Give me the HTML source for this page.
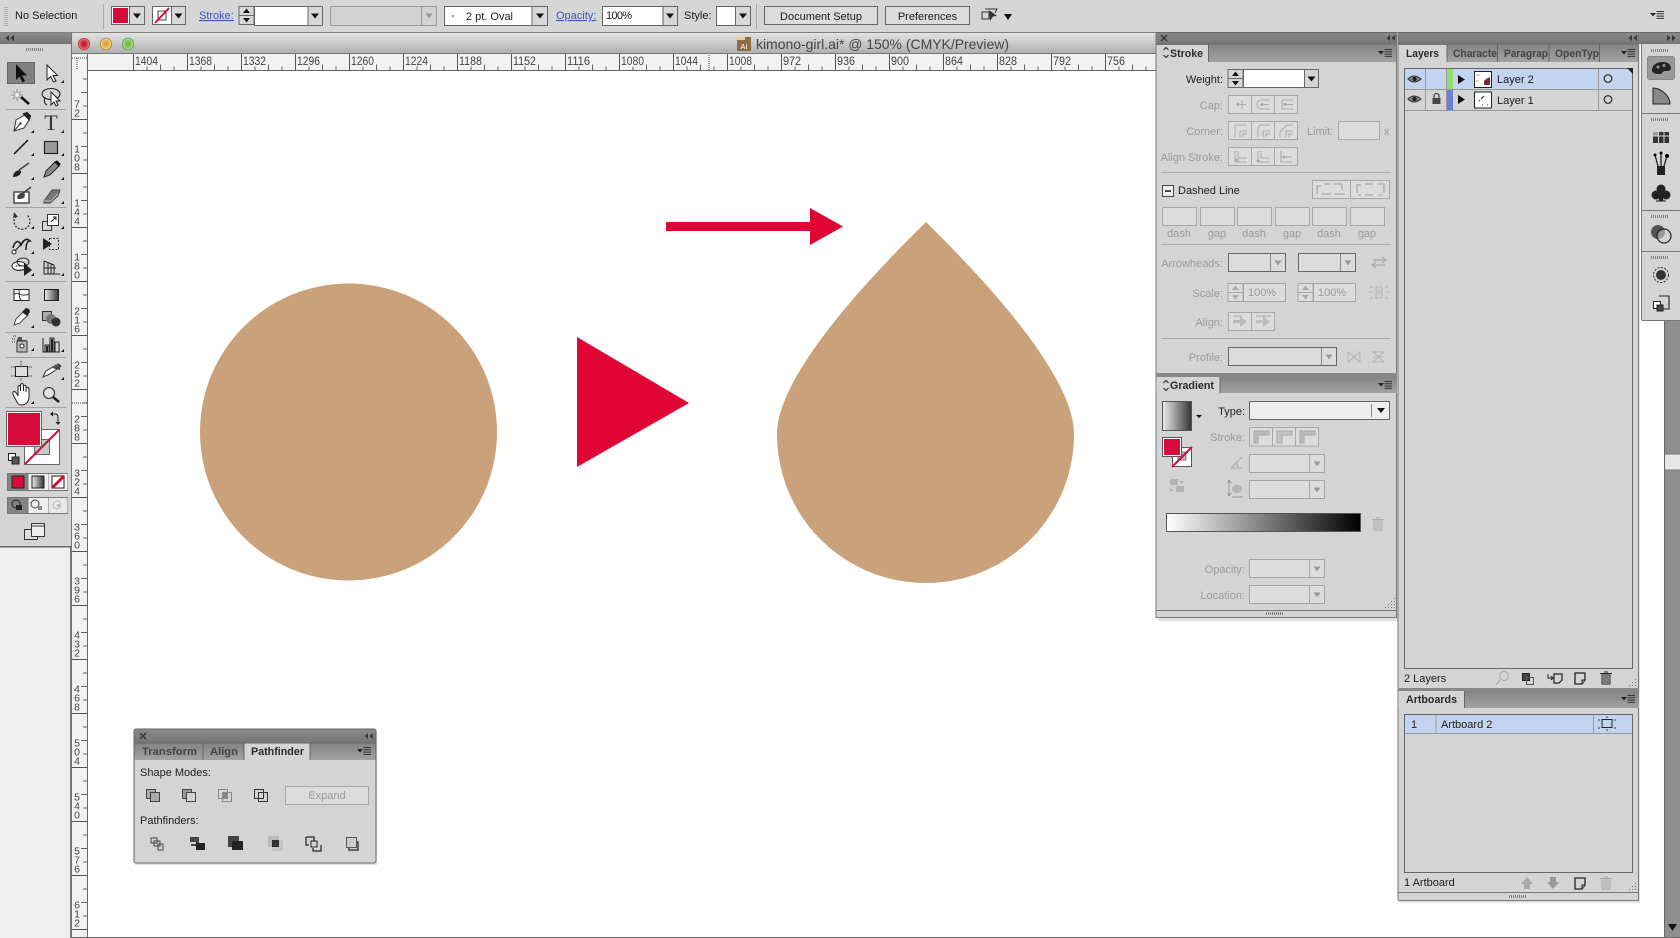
<!DOCTYPE html>
<html lang="en"><head><meta charset="utf-8"><title>kimono-girl.ai</title>
<style>
html,body{margin:0;padding:0;width:1680px;height:938px;overflow:hidden;background:#fff}
svg{display:block}
text{font-family:"Liberation Sans",sans-serif;font-size:11px;fill:#1c1c1c}
.e{text-anchor:end}.m{text-anchor:middle}
.g{fill:#9b9b9b}.b{font-weight:bold}.tab{font-weight:bold;fill:#444}
.lnk{fill:#3c57b4;text-decoration:underline}
.rh{font-size:11.5px;fill:#444}.rv{font-size:10.5px;fill:#444;text-anchor:middle}
.in{fill:#dcdcdc;stroke:#a4a4a4}.in2{fill:#dcdcdc;stroke:#666}
.ln{stroke:#a8a8a8;fill:none}.sep{stroke:#a3a3a3;stroke-width:1}
.ic{fill:none;stroke:#222;stroke-width:1.2}.ig{fill:none;stroke:#aaa;stroke-width:1}
</style></head><body>
<svg width="1680" height="938" viewBox="0 0 1680 938" xmlns="http://www.w3.org/2000/svg">
<defs>
<linearGradient id="tb" x1="0" y1="0" x2="0" y2="1"><stop offset="0" stop-color="#e2e2e2"/><stop offset="1" stop-color="#aeaeae"/></linearGradient>
<linearGradient id="hd" x1="0" y1="0" x2="0" y2="1"><stop offset="0" stop-color="#8a8a8a"/><stop offset="1" stop-color="#767676"/></linearGradient>
<linearGradient id="tr" x1="0" y1="0" x2="0" y2="1"><stop offset="0" stop-color="#838383"/><stop offset="1" stop-color="#a2a2a2"/></linearGradient>
<linearGradient id="gb" x1="0" y1="0" x2="1" y2="0"><stop offset="0" stop-color="#fff"/><stop offset="1" stop-color="#000"/></linearGradient>
<linearGradient id="gs" x1="0" y1="0" x2="1" y2="0"><stop offset="0" stop-color="#eee"/><stop offset="1" stop-color="#333"/></linearGradient>
<radialGradient id="rd"><stop offset="0" stop-color="#b80c2c"/><stop offset=".4" stop-color="#cc2a42"/><stop offset="1" stop-color="#e87a7a"/></radialGradient>
<radialGradient id="yl"><stop offset="0" stop-color="#d9962a"/><stop offset="1" stop-color="#f4d088"/></radialGradient>
<radialGradient id="gr"><stop offset="0" stop-color="#5fae3c"/><stop offset="1" stop-color="#aee08a"/></radialGradient>
<pattern id="ph" patternUnits="userSpaceOnUse" x="133" y="54" width="54" height="16">
<rect x="0" y="0" width="1" height="16" fill="#555"/><rect x="13.5" y="12.5" width="1" height="3.5" fill="#666"/><rect x="27" y="10.5" width="1" height="5.5" fill="#666"/><rect x="40.5" y="12.5" width="1" height="3.5" fill="#666"/>
</pattern>
<pattern id="pv" patternUnits="userSpaceOnUse" x="72" y="119" width="15" height="54">
<rect x="0" y="0" width="15" height="1" fill="#555"/><rect x="11" y="13.5" width="4" height="1" fill="#666"/><rect x="9" y="27" width="6" height="1" fill="#666"/><rect x="11" y="40.5" width="4" height="1" fill="#666"/>
</pattern>
<g id="menu"><path d="M0 -2H6L3 1.5Z" fill="#222"/><path d="M6.5 -3.5H14M6.5 -1.2H14M6.5 1.1H14M6.5 3.4H14" stroke="#333" stroke-width="1"/></g>
<g id="col"><path d="M4 -3L0.5 0L4 3ZM9 -3L5.500 0L9 3Z" fill="#3a3a3a"/></g>
<g id="cor"><path d="M3 -3V0H0Z" fill="#111"/></g>
<g id="darr"><path d="M-4 -2.500H4L0 2.500Z" fill="#111"/></g>
<g id="darg"><path d="M-3.500 -2.500H3.500L0 2.500Z" fill="#999"/></g>
<g id="x"><path d="M-3 -3L3 3M3 -3L-3 3" stroke="#333" stroke-width="1.4"/></g>
<g id="trash"><path d="M-4 -3H4V6H-4Z M-6 -4.500H6 M-2 -6H2 M-2 -2V5 M0 -2V5 M2 -2V5" fill="none" stroke="currentColor" stroke-width="1"/></g>
<g id="newl"><path d="M-5 -5H5V2L2 6H-5Z" fill="none" stroke="#222" stroke-width="1.3"/><path d="M5 2H2V6" fill="#999" stroke="#222"/></g>
<g id="grip"><path d="M.5 0V3M2.500 0V3M4.500 0V3M6.500 0V3M8.500 0V3M10.500 0V3M12.500 0V3M14.500 0V3M16.500 0V3" stroke="#808080" stroke-width="1" shape-rendering="crispEdges"/></g>
<g id="rsz"><path d="M9 0H10V1H9ZM6 3H7V4H6ZM9 3H10V4H9ZM3 6H4V7H3ZM6 6H7V7H6ZM9 6H10V7H9ZM0 9H1V10H0ZM3 9H4V10H3ZM6 9H7V10H6ZM9 9H10V10H9Z" fill="#777"/></g>
<g id="sten"><path d="M0 .5H15V18.500H0Z" fill="#d8d8d8" stroke="#666"/><path d="M0 9.500H15" stroke="#666"/><path d="M7.500 2.500L11 7H4ZM7.500 16.500L11 12H4Z" fill="#111"/></g>
<g id="steg"><path d="M0 .5H15V18.500H0Z" fill="#dcdcdc" stroke="#a4a4a4"/><path d="M0 9.500H15" stroke="#a4a4a4"/><path d="M7.500 2.500L11 7H4ZM7.500 16.500L11 12H4Z" fill="#aaa"/></g>
</defs>

<!-- base -->
<rect width="1680" height="938" fill="#ffffff"/>
<rect x="0" y="0" width="1680" height="33" fill="#d6d6d6"/>
<rect x="0" y="32" width="1680" height="1" fill="#808080"/>
<rect x="0" y="547" width="70" height="391" fill="#efefef"/>
<rect x="70" y="547" width="2" height="391" fill="#777"/>

<!-- doc window title -->
<rect x="72" y="33" width="1090" height="21" fill="url(#tb)"/>
<rect x="72" y="53" width="1090" height="1" fill="#777"/>
<circle cx="84" cy="44" r="5.800" fill="url(#rd)" stroke="#944" stroke-width=".7"/>
<circle cx="106" cy="44" r="5.800" fill="url(#yl)" stroke="#a07c3a" stroke-width=".7"/>
<circle cx="128" cy="44" r="5.800" fill="url(#gr)" stroke="#5f8f4a" stroke-width=".7"/>
<rect x="737" y="37" width="14" height="14" fill="#8c6d44"/><rect x="737" y="37" width="8" height="3" fill="#e8cf8a"/>
<text x="744" y="49" class="m" style="font-size:7px;fill:#f1e4c8;font-weight:bold">Ai</text>
<text x="756" y="49" style="font-size:14px;fill:#444" textLength="253" lengthAdjust="spacing">kimono-girl.ai* @ 150% (CMYK/Preview)</text>

<!-- rulers -->
<rect x="72" y="54" width="1090" height="16" fill="#f2f2f2"/>
<rect x="133" y="54" width="1030" height="16" fill="url(#ph)"/>
<rect x="72" y="70" width="1090" height="1" fill="#666"/>
<rect x="72" y="54" width="15" height="884" fill="#f2f2f2"/>
<rect x="72" y="70" width="15" height="868" fill="url(#pv)"/>
<rect x="87" y="54" width="1" height="884" fill="#666"/>
<path d="M77 58V70M72 58H87" stroke="#444" stroke-dasharray="1 1"/>
<path d="M709 55V70" stroke="#444" stroke-dasharray="1 1"/>
<path d="M72 403H87" stroke="#444" stroke-dasharray="1 1"/>
<g class="rhg">
<text x="135" y="65" class="rh" textLength="23" lengthAdjust="spacingAndGlyphs">1404</text>
<text x="189" y="65" class="rh" textLength="23" lengthAdjust="spacingAndGlyphs">1368</text>
<text x="243" y="65" class="rh" textLength="23" lengthAdjust="spacingAndGlyphs">1332</text>
<text x="297" y="65" class="rh" textLength="23" lengthAdjust="spacingAndGlyphs">1296</text>
<text x="351" y="65" class="rh" textLength="23" lengthAdjust="spacingAndGlyphs">1260</text>
<text x="405" y="65" class="rh" textLength="23" lengthAdjust="spacingAndGlyphs">1224</text>
<text x="459" y="65" class="rh" textLength="23" lengthAdjust="spacingAndGlyphs">1188</text>
<text x="513" y="65" class="rh" textLength="23" lengthAdjust="spacingAndGlyphs">1152</text>
<text x="567" y="65" class="rh" textLength="23" lengthAdjust="spacingAndGlyphs">1116</text>
<text x="621" y="65" class="rh" textLength="23" lengthAdjust="spacingAndGlyphs">1080</text>
<text x="675" y="65" class="rh" textLength="23" lengthAdjust="spacingAndGlyphs">1044</text>
<text x="729" y="65" class="rh" textLength="23" lengthAdjust="spacingAndGlyphs">1008</text>
<text x="783" y="65" class="rh" textLength="18" lengthAdjust="spacingAndGlyphs">972</text>
<text x="837" y="65" class="rh" textLength="18" lengthAdjust="spacingAndGlyphs">936</text>
<text x="891" y="65" class="rh" textLength="18" lengthAdjust="spacingAndGlyphs">900</text>
<text x="945" y="65" class="rh" textLength="18" lengthAdjust="spacingAndGlyphs">864</text>
<text x="999" y="65" class="rh" textLength="18" lengthAdjust="spacingAndGlyphs">828</text>
<text x="1053" y="65" class="rh" textLength="18" lengthAdjust="spacingAndGlyphs">792</text>
<text x="1107" y="65" class="rh" textLength="18" lengthAdjust="spacingAndGlyphs">756</text>
</g>
<g>
<text x="77" y="107.500" class="rv">7</text><text x="77" y="116.300" class="rv">2</text>
<text x="77" y="152.700" class="rv">1</text><text x="77" y="161.500" class="rv">0</text><text x="77" y="170.300" class="rv">8</text>
<text x="77" y="206.700" class="rv">1</text><text x="77" y="215.500" class="rv">4</text><text x="77" y="224.300" class="rv">4</text>
<text x="77" y="260.700" class="rv">1</text><text x="77" y="269.500" class="rv">8</text><text x="77" y="278.300" class="rv">0</text>
<text x="77" y="314.700" class="rv">2</text><text x="77" y="323.500" class="rv">1</text><text x="77" y="332.300" class="rv">6</text>
<text x="77" y="368.700" class="rv">2</text><text x="77" y="377.500" class="rv">5</text><text x="77" y="386.300" class="rv">2</text>
<text x="77" y="422.700" class="rv">2</text><text x="77" y="431.500" class="rv">8</text><text x="77" y="440.300" class="rv">8</text>
<text x="77" y="476.700" class="rv">3</text><text x="77" y="485.500" class="rv">2</text><text x="77" y="494.300" class="rv">4</text>
<text x="77" y="530.700" class="rv">3</text><text x="77" y="539.500" class="rv">6</text><text x="77" y="548.300" class="rv">0</text>
<text x="77" y="584.700" class="rv">3</text><text x="77" y="593.500" class="rv">9</text><text x="77" y="602.300" class="rv">6</text>
<text x="77" y="638.700" class="rv">4</text><text x="77" y="647.500" class="rv">3</text><text x="77" y="656.300" class="rv">2</text>
<text x="77" y="692.700" class="rv">4</text><text x="77" y="701.500" class="rv">6</text><text x="77" y="710.300" class="rv">8</text>
<text x="77" y="746.700" class="rv">5</text><text x="77" y="755.500" class="rv">0</text><text x="77" y="764.300" class="rv">4</text>
<text x="77" y="800.700" class="rv">5</text><text x="77" y="809.500" class="rv">4</text><text x="77" y="818.300" class="rv">0</text>
<text x="77" y="854.700" class="rv">5</text><text x="77" y="863.500" class="rv">7</text><text x="77" y="872.300" class="rv">6</text>
<text x="77" y="908.700" class="rv">6</text><text x="77" y="917.500" class="rv">1</text><text x="77" y="926.300" class="rv">2</text>
</g>

<!-- artwork -->
<circle cx="348.500" cy="432" r="148.500" fill="#c9a27b"/>
<path d="M577 337L689 403L577 467Z" fill="#e00534"/>
<path d="M666 222H810V208L843 226.500L810 245V231H666Z" fill="#e00534"/>
<path d="M926 222C870 277 777 375 777 434C777 516 843 583 926 583C1008 583 1074 516 1074 434C1074 375 982 277 926 222Z" fill="#c9a27b"/>

<!-- scrollbar -->
<rect x="1664" y="33" width="16" height="905" fill="#8f8f8f"/>
<rect x="1664" y="33" width="1" height="905" fill="#666"/>
<rect x="1665" y="454" width="15" height="16" fill="#e6e6e6"/>
<path d="M1665 454H1680M1665 470H1680" stroke="#777"/>
<path d="M1668 924H1677L1672.500 931Z" fill="#111"/>
<rect x="72" y="937" width="1608" height="1" fill="#666"/>

<!-- top control bar -->
<g>
<path d="M5 7V27M7 7V27" stroke="#888" stroke-dasharray="1 1"/>
<text x="15" y="19">No Selection</text>
<path d="M103.500 4V29" stroke="#aaa"/>
<rect x="111.500" y="6.500" width="33" height="18" fill="#d8d8d8" stroke="#666"/>
<rect x="112.500" y="7.500" width="16" height="16" fill="#d60b3a" stroke="#fff"/>
<path d="M129.500 7V24" stroke="#666"/><use href="#darr" x="137" y="16"/>
<rect x="152.500" y="6.500" width="33" height="18" fill="#d8d8d8" stroke="#666"/>
<rect x="153" y="7" width="18" height="17" fill="#fff"/>
<rect x="158" y="11" width="8" height="9" fill="none" stroke="#444"/>
<path d="M155 23L169 8" stroke="#d60b3a" stroke-width="2"/>
<path d="M171.500 7V24" stroke="#666"/><use href="#darr" x="178.500" y="16"/>
<text x="199" y="19" class="lnk">Stroke:</text>
<g transform="translate(239,6)"><use href="#sten"/></g>
<rect x="254.500" y="6.500" width="68" height="19" fill="#fff" stroke="#666"/>
<rect x="308" y="7" width="14" height="18" fill="#d8d8d8"/><path d="M308 7V25" stroke="#666"/><use href="#darr" x="315" y="16"/>
<rect x="330.500" y="6.500" width="106" height="19" fill="#d2d2d2" stroke="#999"/>
<path d="M421.500 7V25" stroke="#999"/><use href="#darg" x="429" y="16"/>
<rect x="444.500" y="6.500" width="103" height="19" fill="#fff" stroke="#666"/>
<rect x="532" y="7" width="15" height="18" fill="#d8d8d8"/><path d="M532 7V25" stroke="#666"/><use href="#darr" x="540" y="16"/>
<circle cx="453" cy="16" r=".8" fill="#111"/>
<text x="466" y="20" textLength="47" lengthAdjust="spacing">2 pt. Oval</text>
<text x="556" y="19" class="lnk">Opacity:</text>
<rect x="602.500" y="6.500" width="75" height="19" fill="#fff" stroke="#666"/>
<rect x="663" y="7" width="14" height="18" fill="#d8d8d8"/><path d="M663 7V25" stroke="#666"/><use href="#darr" x="670" y="16"/>
<text x="606" y="19" textLength="26" lengthAdjust="spacing">100%</text>
<text x="684" y="19">Style:</text>
<rect x="716.500" y="6.500" width="34" height="19" fill="#d8d8d8" stroke="#666"/>
<rect x="717" y="7" width="18" height="18" fill="#fff"/><path d="M735.500 7V25" stroke="#666"/><use href="#darr" x="743" y="16"/>
<path d="M756.500 4V29" stroke="#aaa"/>
<rect x="764.500" y="6.500" width="113" height="18" fill="#dcdcdc" stroke="#666"/>
<text x="821" y="20" class="m">Document Setup</text>
<rect x="885.500" y="6.500" width="84" height="18" fill="#dcdcdc" stroke="#666"/>
<text x="927.500" y="20" class="m">Preferences</text>
<path d="M982 12H989V19H982ZM985 9L992 9L997 9L995 13" fill="none" stroke="#333"/>
<path d="M989 10L997 16L993 16.500L990 21Z" fill="#333"/>
<path d="M1004 14H1012L1008 20Z" fill="#111"/>
<use href="#menu" x="1650" y="15"/>
</g>

<!-- Tools panel -->
<rect x="0" y="33" width="72" height="514" fill="#d4d4d4"/>
<rect x="0" y="33" width="72" height="11" fill="url(#hd)"/>
<rect x="71" y="33" width="1" height="514" fill="#777"/>
<rect x="0" y="546" width="72" height="1.500" fill="#666"/>
<g transform="translate(5,38)"><path d="M4 -3L.5 0L4 3ZM9 -3L5.500 0L9 3Z" fill="#333"/></g>
<use href="#grip" x="26" y="48"/>
<rect x="7.500" y="62.500" width="27" height="21" fill="#808080" stroke="#666"/>
<path d="M16 64V80L19.500 76.500L22.500 82.500L25 81L22 75.500L27 75.500Z" fill="#111"/>
<path d="M47 65V80L50.500 76.500L53.500 82L56 81L53 75.500L57.500 75.500Z" fill="#fff" stroke="#222"/>
<use href="#cor" x="61" y="83"/>
<!-- magic wand -->
<path d="M21 97L29 104" stroke="#111" stroke-width="2.500"/>
<path d="M17 89V101M11 95H23M13 91L21 99M21 91L13 99" stroke="#9a9a9a" stroke-width="1.200"/><circle cx="17" cy="95" r="2" fill="#eee"/>
<!-- lasso -->
<ellipse cx="51" cy="94" rx="9" ry="5.500" fill="none" stroke="#222" stroke-width="1.100"/>
<path d="M45 97Q43 103 47 105" fill="none" stroke="#222"/>
<path d="M51 92V105L54 102L56 106L58 105L56 101L60 101Z" fill="#fff" stroke="#222"/>
<line x1="6" y1="109.500" x2="66" y2="109.500" class="sep"/>
<!-- pen -->
<path d="M14 131L16 120L25 115L29 120L24 128Z" fill="#fff" stroke="#333"/>
<path d="M24 114L29 119L30 116L27 113Z" fill="#222" stroke="#222" stroke-width="2"/>
<path d="M14 131L20 124" stroke="#333"/><circle cx="20.500" cy="123.500" r="1.200" fill="#333"/>
<use href="#cor" x="31" y="133"/>
<text x="51" y="130" class="m" style="font-family:'Liberation Serif',serif;font-size:22px;fill:#333">T</text>
<use href="#cor" x="61" y="133"/>
<path d="M14 154L28 140" stroke="#111" stroke-width="1.400"/><use href="#cor" x="31" y="156"/>
<rect x="44.500" y="141.500" width="13" height="12" fill="#9a9a9a" stroke="#222" stroke-width="1.200"/><use href="#cor" x="61" y="156"/>
<!-- brush -->
<path d="M19 170L29 163" stroke="#444" stroke-width="1.600"/><path d="M13 177C13 172 18 169 21 171C22 174 18 177 13 177Z" fill="#222"/><use href="#cor" x="31" y="180"/>
<!-- pencil -->
<path d="M44 177L46 171L55 162L59 166L50 175Z" fill="#888" stroke="#222"/><path d="M55 162L59 166L60 164L57 161Z" fill="#111" stroke="#111"/><use href="#cor" x="61" y="180"/>
<!-- blob -->
<rect x="14" y="192" width="15" height="11" fill="#fff" stroke="#333" stroke-width="1.300"/>
<path d="M31 187L22 194M18 198C18 194 22 193 24 194C25 197 22 199 18 198Z" stroke="#444" stroke-width="1.500" fill="#444"/>
<!-- eraser -->
<path d="M44 201L52 190H60L58 196L50 203H44Z" fill="#777" stroke="#444"/><path d="M44 201H51L58 194" fill="none" stroke="#bbb"/><use href="#cor" x="61" y="204"/>
<line x1="6" y1="207.500" x2="66" y2="207.500" class="sep"/>
<!-- rotate -->
<path d="M16 216A8 8 0 1 0 27 215" fill="none" stroke="#333" stroke-width="1.300" stroke-dasharray="2 1.500"/><path d="M14 212L18 217L13 218Z" fill="#333"/><use href="#cor" x="31" y="229"/>
<!-- scale -->
<rect x="42.500" y="221.500" width="9" height="9" fill="none" stroke="#333"/><rect x="47.500" y="214.500" width="11" height="11" fill="#fff" stroke="#333"/><path d="M51 222L56 217M53 217H56V220" fill="none" stroke="#222"/><use href="#cor" x="61" y="229"/>
<!-- warp -->
<path d="M13 248C15 240 19 240 21 245C24 239 27 238 30 241C27 241 26 245 26 250" fill="none" stroke="#222" stroke-width="1.600"/><path d="M14 252L25 240" stroke="#111"/><circle cx="14" cy="252" r="2" fill="#fff" stroke="#222"/><use href="#cor" x="31" y="254"/>
<!-- free transform -->
<rect x="49.500" y="238.500" width="9" height="11" fill="none" stroke="#333" stroke-dasharray="2 1.500"/><path d="M43 238L52 244L43 250Z" fill="#222"/>
<!-- shape builder -->
<ellipse cx="19" cy="266" rx="7" ry="4.500" fill="#fff" stroke="#222"/><ellipse cx="23" cy="262" rx="6" ry="4" fill="none" stroke="#222"/><path d="M16 266H25M17 270H30" stroke="#222" stroke-dasharray="1.500 1"/><path d="M24 263L32 270L24 276Z" fill="#222"/><use href="#cor" x="31" y="276"/>
<!-- perspective -->
<path d="M44 261V274H60M44 261L54 265V274M48 263V274M51 264V274M44 268H56" fill="none" stroke="#222"/><use href="#cor" x="61" y="276"/>
<line x1="6" y1="281.500" x2="66" y2="281.500" class="sep"/>
<!-- mesh -->
<rect x="14" y="289.500" width="15" height="11" fill="#fff" stroke="#222"/><path d="M14 295C18 290 20 298 29 294M19 290C20 295 18 298 22 301" fill="none" stroke="#333"/>
<rect x="44.500" y="289.500" width="14" height="11" fill="url(#gs)" stroke="#222"/>
<!-- eyedropper -->
<path d="M14 325L16 319L24 311L28 315L20 323Z" fill="#fff" stroke="#444"/><path d="M22 312L26 308L29 309L30 312L27 316Z" fill="#222"/><use href="#cor" x="31" y="328"/>
<!-- blend -->
<rect x="42.500" y="311.500" width="9" height="9" fill="#aaa" stroke="#333"/><circle cx="51" cy="319" r="5" fill="#777"/><circle cx="56" cy="322" r="4.500" fill="#333"/>
<line x1="6" y1="332.500" x2="66" y2="332.500" class="sep"/>
<!-- sprayer -->
<path d="M18 337H22V340H26V342H17V340Z" fill="#555"/><rect x="17" y="341" width="10" height="11" fill="#bbb" stroke="#333"/><circle cx="22" cy="346" r="2" fill="#fff" stroke="#222"/><path d="M12 339H15M13 336H16M12 342H15" stroke="#333" stroke-dasharray="1 1"/><use href="#cor" x="31" y="351"/>
<!-- graph -->
<path d="M43 338V352H60M45 352V345H49V352M50 352V338H54V352M55 352V342H59V352" fill="none" stroke="#222"/><path d="M46 352V346h2v6zM51 352V339h2v13z" fill="#222"/><use href="#cor" x="61" y="352"/>
<line x1="6" y1="357.500" x2="66" y2="357.500" class="sep"/>
<!-- artboard -->
<rect x="15.500" y="366.500" width="12" height="10" fill="#dedede" stroke="#222"/><path d="M21 361V365M21 378V381M11 367H15M28 367H32M11 376H15M28 376H32" stroke="#444" stroke-dasharray="1.500 1"/>
<!-- slice -->
<path d="M43 377L46 371L58 364L61 366L50 374Z" fill="#fff" stroke="#333"/><path d="M52 368L60 364L60 370Z" fill="#444"/><use href="#cor" x="61" y="380"/>
<!-- hand -->
<path d="M16 400C13 395 12 393 13.500 391.500C15 391 17 394 18 396V387C18 385 20 385 20.500 387V391V385C21 383 23 383 23.500 385V391V386C24 385 26 385 26 387V392V388C27 387 29 387 29 389V396C29 402 26 405 21 405C19 405 17 403 16 400Z" fill="#fff" stroke="#222"/><use href="#cor" x="31" y="404"/>
<!-- zoom -->
<circle cx="49" cy="393" r="5.500" fill="#e2e2e2" stroke="#444" stroke-width="1.300"/><path d="M53 397L59 402" stroke="#222" stroke-width="2.500"/>
<line x1="6" y1="407.500" x2="66" y2="407.500" class="sep"/>
<!-- fill stroke -->
<rect x="24.500" y="429.500" width="35" height="35" fill="#fff" stroke="#666"/>
<rect x="34.500" y="439.500" width="15" height="15" fill="#c8c8c8" stroke="#666"/>
<path d="M25 464L59 430" stroke="#d60b3a" stroke-width="2"/>
<rect x="6.500" y="411.500" width="35" height="35" fill="#d60b3a" stroke="#666"/>
<rect x="7.500" y="412.500" width="33" height="33" fill="#d60b3a" stroke="#fff"/>
<path d="M52 414H55Q58 414 58 418V422" fill="none" stroke="#222" stroke-width="1"/><path d="M53 411.500V416.500L50 414ZM55.500 422H60.500L58 425Z" fill="#222"/>
<rect x="8.500" y="453.500" width="7" height="7" fill="#fff" stroke="#222"/><rect x="12" y="457" width="7" height="7" fill="#555" stroke="#222"/>
<!-- modes -->
<rect x="7.500" y="473.500" width="60" height="17" fill="#d8d8d8" stroke="#777"/>
<rect x="8" y="474" width="20" height="16" fill="#838383"/><path d="M28 474V490M48 474V490" stroke="#777"/>
<rect x="28.500" y="474" width="19.500" height="16" fill="#f0f0f0"/><rect x="48.500" y="474" width="19" height="16" fill="#f0f0f0"/>
<rect x="12" y="476" width="12" height="12" fill="#d60b3a" stroke="#222"/>
<rect x="32" y="476" width="12" height="12" fill="url(#gs)" stroke="#222"/>
<rect x="52" y="476" width="12" height="12" fill="#fff" stroke="#222"/><path d="M52 488L64 476" stroke="#d60b3a" stroke-width="3"/>
<rect x="7.500" y="497.500" width="60" height="16" fill="#ddd" stroke="#777"/>
<rect x="8" y="498" width="20" height="15" fill="#838383"/><path d="M28 498V513M48 498V513" stroke="#777"/>
<rect x="28.500" y="498" width="19.500" height="15" fill="#eee"/><rect x="48.500" y="498" width="19" height="15" fill="#e8e8e8"/>
<circle cx="16" cy="504" r="4" fill="none" stroke="#222"/><rect x="16" y="505" width="6" height="5" fill="#222"/>
<circle cx="35" cy="504" r="4" fill="none" stroke="#444"/><rect x="38" y="506" width="4" height="4" fill="#888"/>
<circle cx="57" cy="505" r="4" fill="none" stroke="#bbb"/><rect x="57" y="504" width="3" height="3" fill="#bbb"/>
<rect x="24.500" y="529.500" width="13" height="10" fill="#ddd" stroke="#333"/>
<rect x="31.500" y="523.500" width="13" height="13" fill="#eee" stroke="#333"/><path d="M32 526H44" stroke="#333"/>

<!-- Stroke + gradient panel -->
<rect x="1158" y="34" width="241" height="587" fill="#000" opacity=".12"/>
<rect x="1156" y="32" width="241" height="586" fill="#d4d4d4"/>
<rect x="1156" y="32" width="241" height="12" fill="url(#hd)"/>
<rect x="1156" y="32" width="241" height="1" fill="#666"/>
<use href="#x" x="1164" y="38"/>
<use href="#col" x="1386" y="38"/>
<rect x="1156" y="44" width="241" height="18" fill="url(#tr)"/>
<path d="M1156 44H1397" stroke="#666"/>
<rect x="1156.500" y="45" width="51.500" height="18" fill="#d4d4d4"/>
<path d="M1208.500 44V62" stroke="#666"/>
<path d="M1163.500 50L1166 47.500L1168.500 50M1163.500 55L1166 57.500L1168.500 55" fill="none" stroke="#222"/>
<text x="1170" y="57" class="b" style="fill:#2a2a2a" textLength="33" lengthAdjust="spacingAndGlyphs">Stroke</text>
<use href="#menu" x="1378" y="53"/>
<path d="M1156 32V618M1396.500 32V618" stroke="#777"/>

<text x="1223" y="83" class="e">Weight:</text>
<g transform="translate(1228,69)"><use href="#sten"/></g>
<rect x="1243.500" y="69.500" width="75" height="18" fill="#fff" stroke="#666"/>
<rect x="1304" y="70" width="14" height="17" fill="#d4d4d4"/><path d="M1304.500 70V87" stroke="#666"/><use href="#darr" x="1311.500" y="79"/>

<text x="1223" y="109" class="e g">Cap:</text>
<rect x="1228.500" y="95.500" width="69" height="18" fill="#dcdcdc" stroke="#a8a8a8"/><path d="M1251.500 95V113M1274.500 95V113" class="ln"/>
<path d="M1242 100V109M1237 104.500H1246" class="ig"/><circle cx="1238" cy="104.500" r="1.500" fill="#aaa"/>
<path d="M1270 100H1262Q1257 100 1257 104.500Q1257 109 1262 109H1270M1260 104.500H1269" class="ig"/><circle cx="1262" cy="104.500" r="1.500" fill="#aaa"/>
<path d="M1282 100H1293M1282 100V109H1293M1285 104.500H1293" class="ig"/><circle cx="1285" cy="104.500" r="1.500" fill="#aaa"/>

<text x="1223" y="135" class="e g">Corner:</text>
<rect x="1228.500" y="121.500" width="69" height="18" fill="#dcdcdc" stroke="#a8a8a8"/><path d="M1251.500 121V139M1274.500 121V139" class="ln"/>
<path d="M1235 137V125H1247M1240 137V131H1247M1243 137V134H1247" class="ig"/>
<path d="M1258 137V129Q1258 125 1262 125H1270M1263 137V131H1270M1266 137V134H1270" class="ig"/>
<path d="M1280 137V132L1287 125H1293M1286 137V131H1293M1289 137V134H1293" class="ig"/>
<text x="1307" y="135" class="g">Limit:</text>
<rect x="1338.500" y="121.500" width="41" height="18" fill="#dcdcdc" stroke="#a8a8a8"/>
<text x="1384" y="135" class="g">x</text>

<text x="1223" y="161" class="e g">Align Stroke:</text>
<rect x="1228.500" y="147.500" width="69" height="18" fill="#dcdcdc" stroke="#a8a8a8"/><path d="M1251.500 147V165M1274.500 147V165" class="ln"/>
<path d="M1235 151V162H1247M1238 151V158H1247M1235 160" class="ig"/><circle cx="1237" cy="160" r="1.500" fill="#aaa"/>
<path d="M1258 151V162H1270M1261 151V158H1270" class="ig"/><circle cx="1258" cy="161" r="1.500" fill="#aaa"/>
<path d="M1281 151V162H1292M1281 157H1292" class="ig"/><circle cx="1284" cy="157" r="1.500" fill="#aaa"/>
<path d="M1161 172.500H1391" class="ln"/>

<rect x="1162.500" y="185.500" width="11" height="11" fill="#eee" stroke="#444"/><path d="M1165 191H1171" stroke="#111" stroke-width="1.500"/>
<text x="1178" y="194">Dashed Line</text>
<rect x="1312.500" y="180.500" width="77" height="18" fill="#dcdcdc" stroke="#a8a8a8"/><path d="M1350.500 180V198" class="ln"/>
<path d="M1317 194V186H1321M1324 184H1331M1334 184H1342V190M1321 194H1331M1334 194H1345" stroke="#aaa" fill="none" stroke-width="1.300"/>
<path d="M1357 193V185H1361M1365 184H1373M1377 184H1384V193M1358 195H1361M1365 195H1373M1378 195H1383" stroke="#aaa" fill="none" stroke-width="1.300"/>

<g fill="#dcdcdc" stroke="#a8a8a8">
<rect x="1162.500" y="207.500" width="34" height="18"/><rect x="1200.500" y="207.500" width="34" height="18"/><rect x="1237.500" y="207.500" width="34" height="18"/><rect x="1275.500" y="207.500" width="34" height="18"/><rect x="1312.500" y="207.500" width="34" height="18"/><rect x="1350.500" y="207.500" width="34" height="18"/>
</g>
<text x="1179" y="237" class="m g">dash</text><text x="1217" y="237" class="m g">gap</text><text x="1254" y="237" class="m g">dash</text><text x="1292" y="237" class="m g">gap</text><text x="1329" y="237" class="m g">dash</text><text x="1367" y="237" class="m g">gap</text>
<path d="M1161 244.500H1391" class="ln"/>

<text x="1223" y="267" class="e g">Arrowheads:</text>
<rect x="1228.500" y="253.500" width="57" height="18" class="in2"/><path d="M1270.500 254V271" stroke="#888"/><use href="#darg" x="1278" y="263"/>
<rect x="1298.500" y="253.500" width="57" height="18" class="in2"/><path d="M1340.500 254V271" stroke="#888"/><use href="#darg" x="1348" y="263"/>
<path d="M1373 260H1385M1382 257L1386 260L1382 263M1385 265H1373M1376 262L1372 265L1376 268" fill="none" stroke="#aaa" stroke-width="1.200"/>

<text x="1223" y="297" class="e g">Scale:</text>
<g transform="translate(1228,283)"><use href="#steg"/></g>
<rect x="1243.500" y="283.500" width="42" height="18" class="in"/>
<text x="1248" y="296" class="g">100%</text>
<g transform="translate(1298,283)"><use href="#steg"/></g>
<rect x="1313.500" y="283.500" width="42" height="18" class="in"/>
<text x="1318" y="296" class="g">100%</text>
<path d="M1376 287H1382V291H1376ZM1376 293H1382V298H1376ZM1370 286L1373 288M1370 299L1373 297M1388 286L1385 288M1388 299L1385 297M1369 292H1372M1386 292H1389" fill="none" stroke="#b4b4b4"/>

<text x="1223" y="326" class="e g">Align:</text>
<rect x="1228.500" y="312.500" width="46" height="18" fill="#dcdcdc" stroke="#a8a8a8"/><path d="M1251.500 312V330" class="ln"/>
<path d="M1233 316H1242M1233 321H1240" stroke="#aaa"/><path d="M1233 320H1240V316L1247 321.500L1240 327V323H1233Z" fill="#bbb"/>
<path d="M1256 316H1271M1256 321H1263" stroke="#aaa"/><path d="M1256 320H1263V316L1270 321.500L1263 327V323H1256Z" fill="#bbb"/>
<path d="M1161 338.500H1391" class="ln"/>

<text x="1223" y="361" class="e g">Profile:</text>
<rect x="1228.500" y="347.500" width="108" height="18" class="in2"/><path d="M1321.500 348V365" stroke="#888"/><use href="#darg" x="1329" y="357"/>
<path d="M1348 352L1354 357L1348 362ZM1360 352L1354 357L1360 362Z" fill="none" stroke="#b4b4b4"/><path d="M1354 351V363" stroke="#bbb" stroke-dasharray="1 1"/>
<path d="M1373 352H1384L1378.500 357ZM1373 362H1384L1378.500 357Z" fill="none" stroke="#b4b4b4"/><path d="M1373 357H1384" stroke="#aaa" stroke-dasharray="1 1"/>

<!-- gradient -->
<rect x="1156" y="373" width="241" height="4" fill="#888"/>
<rect x="1156" y="377" width="241" height="16" fill="url(#tr)"/>
<rect x="1156.500" y="377" width="63.500" height="17" fill="#d4d4d4"/><path d="M1220 377V393" stroke="#666"/>
<path d="M1163.500 383L1166 380.500L1168.500 383M1163.500 388L1166 390.500L1168.500 388" fill="none" stroke="#222"/>
<text x="1170" y="389" class="b" style="fill:#2a2a2a" textLength="44" lengthAdjust="spacingAndGlyphs">Gradient</text>
<use href="#menu" x="1378" y="385"/>
<rect x="1162.500" y="401.500" width="29" height="29" fill="url(#gs)" stroke="#555"/>
<path d="M1196 415H1202L1199 418Z" fill="#111"/>
<text x="1245" y="415" class="e">Type:</text>
<rect x="1249.500" y="401.500" width="140" height="18" fill="#ededed" stroke="#666"/><path d="M1371.500 404V417" stroke="#888"/><use href="#darr" x="1381" y="410.500"/>
<text x="1245" y="441" class="e g">Stroke:</text>
<rect x="1249.500" y="427.500" width="69" height="18.500" fill="#dcdcdc" stroke="#a8a8a8"/><path d="M1272.500 428V446M1295.500 428V446" class="ln"/>
<path d="M1254 443V431H1269V435H1258V443Z" fill="#bbb" stroke="#aaa"/><path d="M1277 443V431H1292V435H1282V443Z" fill="#c4c4c4" stroke="#aaa"/><path d="M1300 443V431H1315V435H1304V443Z" fill="#bbb" stroke="#aaa"/>
<rect x="1172.500" y="447.500" width="19" height="19" fill="#fff" stroke="#555"/><rect x="1178" y="452" width="8" height="8" fill="#bbb" stroke="#777"/>
<path d="M1172 467L1192 447" stroke="#d60b3a" stroke-width="2"/>
<rect x="1162.500" y="437.500" width="19" height="19" fill="#d60b3a" stroke="#555"/><rect x="1163.500" y="438.500" width="17" height="17" fill="#d60b3a" stroke="#fff"/>
<path d="M1231 468L1242 457M1231 468H1243M1238 468Q1238 464 1235 463" fill="none" stroke="#aaa"/>
<rect x="1249.500" y="454.500" width="75" height="18" class="in"/><path d="M1309.500 455V472" class="ln"/><use href="#darg" x="1317" y="464"/>
<ellipse cx="1237" cy="489" rx="5" ry="4" fill="#b4b4b4"/><path d="M1229 481V495M1227 483L1229 480L1231 483M1227 493L1229 496L1231 493M1232 497H1243" fill="none" stroke="#999"/>
<rect x="1249.500" y="480.500" width="75" height="18" class="in"/><path d="M1309.500 481V498" class="ln"/><use href="#darg" x="1317" y="490"/>
<rect x="1170" y="479" width="8" height="6" fill="#b4b4b4"/><rect x="1176" y="486" width="8" height="6" fill="#b4b4b4"/><path d="M1179 481H1184L1181.500 484ZM1169 491H1174L1171.500 488Z" fill="#b4b4b4"/>
<rect x="1166.500" y="513.500" width="194" height="18" fill="url(#gb)" stroke="#555"/>
<use href="#trash" x="1378" y="524" style="color:#aaa"/>
<text x="1245" y="573" class="e g">Opacity:</text>
<rect x="1249.500" y="559.500" width="75" height="18" class="in"/><path d="M1309.500 560V577" class="ln"/><use href="#darg" x="1317" y="569"/>
<text x="1245" y="599" class="e g">Location:</text>
<rect x="1249.500" y="585.500" width="75" height="18" class="in"/><path d="M1309.500 586V603" class="ln"/><use href="#darg" x="1317" y="595"/>
<use href="#rsz" x="1385" y="598"/>
<path d="M1156 610.500H1397M1156 617.500H1397" stroke="#777"/>
<use href="#grip" x="1266" y="612"/>

<!-- right dock strip + layers panel -->
<rect x="1400" y="34" width="240" height="869" fill="#000" opacity=".1"/>
<rect x="1398" y="32" width="241" height="868" fill="#d4d4d4"/>
<rect x="1398" y="32" width="282" height="12" fill="url(#hd)"/>
<rect x="1398" y="32" width="282" height="1" fill="#666"/>
<use href="#col" x="1628" y="38"/>
<path d="M1667 35L1670.500 38L1667 41ZM1672 35L1675.500 38L1672 41Z" fill="#333"/>
<rect x="1398" y="44" width="241" height="18" fill="url(#tr)"/>
<path d="M1398 44H1639" stroke="#666"/>
<rect x="1398.500" y="45" width="48.500" height="18" fill="#d4d4d4"/>
<text x="1406" y="57" class="b" style="fill:#2a2a2a" textLength="33" lengthAdjust="spacingAndGlyphs">Layers</text>
<path d="M1447 44V62M1497.500 44V62M1549 44V62M1599.500 44V62" stroke="#666"/>
<text x="1453" y="57" class="tab" textLength="44" lengthAdjust="spacingAndGlyphs">Characte</text>
<text x="1504" y="57" class="tab" textLength="44" lengthAdjust="spacingAndGlyphs">Paragrap</text>
<text x="1555" y="57" class="tab" textLength="44" lengthAdjust="spacingAndGlyphs">OpenTyp</text>
<use href="#menu" x="1621" y="53"/>
<path d="M1398 32V900M1638.500 32V900" stroke="#777"/>
<rect x="1404.500" y="68.500" width="228" height="600" fill="#d4d4d4" stroke="#666"/>
<rect x="1405" y="69" width="227" height="20" fill="#c3d4f1"/>
<path d="M1405 89.500H1632M1405 110.500H1632M1425.500 69V110M1446.500 69V110M1598.500 69V110" stroke="#999"/>
<rect x="1447" y="69" width="6" height="20" fill="#8ee06a"/><rect x="1447" y="90" width="6" height="20" fill="#6c7ee0"/>
<path d="M1627 68H1633V74Z" fill="#222"/>
<path d="M1408 79Q1414 73 1421 79Q1414 85 1408 79Z" fill="#888" stroke="#333"/><circle cx="1414.500" cy="79" r="2.200" fill="#222"/>
<path d="M1408 99Q1414 93 1421 99Q1414 105 1408 99Z" fill="#888" stroke="#333"/><circle cx="1414.500" cy="99" r="2.200" fill="#222"/>
<path d="M1434 98V96A2.500 2.500 0 0 1 1439 96V98" fill="none" stroke="#444" stroke-width="1.200"/><rect x="1432.500" y="98" width="8" height="6" fill="#444"/>
<path d="M1458 75V84L1465 79.500ZM1458 95V104L1465 99.500Z" fill="#111"/>
<rect x="1474.500" y="71.500" width="17" height="16" fill="#fff" stroke="#222"/>
<path d="M1476 75H1480M1476 81H1479" stroke="#d8a0a0"/><path d="M1486 79L1490 77V85H1484V81Z" fill="#7c2838"/>
<text x="1497" y="83">Layer 2</text>
<rect x="1474.500" y="92" width="17" height="16" fill="#fff" stroke="#222"/>
<path d="M1481 99L1484 96M1479 101L1480 100M1482 105H1483M1487 105H1488" stroke="#222"/>
<text x="1497" y="104">Layer 1</text>
<circle cx="1608" cy="78.500" r="3.800" fill="none" stroke="#222" stroke-width="1.100"/>
<circle cx="1608" cy="99.500" r="3.800" fill="none" stroke="#222" stroke-width="1.100"/>
<text x="1404" y="682">2 Layers</text>
<circle cx="1504" cy="676" r="4.500" fill="none" stroke="#aaa"/><path d="M1500 680L1496 685" stroke="#aaa" stroke-width="1.300"/>
<rect x="1522.500" y="673.500" width="7" height="7" fill="#444" stroke="#222"/><rect x="1526.500" y="677.500" width="7" height="7" fill="none" stroke="#555"/>
<path d="M1548 674V678H1553M1551 676L1553 678L1551 680" fill="none" stroke="#222"/><path d="M1554 674H1562V680L1559 683H1554Z" fill="none" stroke="#222" stroke-width="1.200"/>
<use href="#newl" x="1580" y="678"/>
<use href="#trash" x="1606" y="678" style="color:#222"/>
<use href="#rsz" x="1629" y="676"/>
<rect x="1398" y="688" width="241" height="3" fill="#888"/>
<rect x="1398" y="691" width="241" height="17" fill="url(#tr)"/>
<rect x="1398.500" y="691" width="66" height="18" fill="#d4d4d4"/>
<path d="M1464.500 691V708" stroke="#666"/>
<text x="1406" y="703" class="b" style="fill:#2a2a2a" textLength="51" lengthAdjust="spacingAndGlyphs">Artboards</text>
<use href="#menu" x="1621" y="699"/>
<rect x="1404.500" y="714.500" width="228" height="158" fill="#d4d4d4" stroke="#666"/>
<rect x="1405" y="715" width="227" height="18" fill="#c3d4f1"/>
<path d="M1405 733.500H1632M1436 715V733M1593.500 715V733" stroke="#999"/>
<text x="1411" y="728">1</text>
<text x="1441" y="728">Artboard 2</text>
<rect x="1602" y="719.500" width="10" height="8" fill="none" stroke="#222"/><path d="M1607 716V718M1607 729V731M1600 720H1598M1614 720H1616M1600 728H1598M1614 728H1616" stroke="#444"/>
<text x="1404" y="886">1 Artboard</text>
<path d="M1527 877L1533 884H1530V889H1524V884H1521Z" fill="#aaa"/>
<path d="M1553 889L1559 882H1556V877H1550V882H1547Z" fill="#999"/>
<use href="#newl" x="1580" y="883"/>
<use href="#trash" x="1606" y="883" style="color:#aaa"/>
<use href="#rsz" x="1629" y="880"/>
<path d="M1398 892.500H1639M1398 900.500H1639" stroke="#777"/>
<use href="#grip" x="1509" y="895"/>

<!-- dock -->
<rect x="1642" y="44" width="38" height="276" fill="#d4d4d4"/>
<path d="M1641.500 44V320M1642 320.500H1680" stroke="#777"/>
<path d="M1642 113.500H1680M1642 210.500H1680M1642 251.500H1680" stroke="#777"/>
<use href="#grip" x="1651" y="49"/><use href="#grip" x="1651" y="118"/><use href="#grip" x="1651" y="215"/><use href="#grip" x="1651" y="256"/>
<rect x="1647.500" y="56.500" width="27" height="23" rx="2" fill="#999" stroke="#888"/>
<path d="M1652 70C1652 65 1657 62 1663 62C1668 62 1671 65 1671 68C1671 71 1668 71 1665 71C1662 71 1663 74 1660 74C1655 74 1652 73 1652 70Z" fill="#222"/><circle cx="1658" cy="67" r="1.500" fill="#999"/><circle cx="1664" cy="65.500" r="1.500" fill="#999"/>
<path d="M1653 104V88C1661 88 1670 96 1670 104Z" fill="#888" stroke="#222"/>
<rect x="1653" y="132" width="16" height="11" fill="#333"/><path d="M1653 136H1669M1658.500 132V143M1664 132V143" stroke="#d4d4d4"/><rect x="1653" y="132" width="5" height="3.500" fill="#999"/>
<rect x="1657" y="166" width="8" height="9" fill="#222"/><path d="M1658 166L1655 155M1661 166V152M1664 166L1667 156" stroke="#222" stroke-width="1.300"/><circle cx="1655" cy="155" r="1.500"/><circle cx="1661" cy="153" r="1.500"/><circle cx="1667" cy="156" r="2"/>
<circle cx="1661" cy="189" r="4.500" fill="#222"/><circle cx="1656" cy="195" r="4.500" fill="#222"/><circle cx="1666" cy="195" r="4.500" fill="#222"/><path d="M1661 192L1659 201H1663Z M1656 201H1666" fill="#222" stroke="#222"/>
<circle cx="1658" cy="232" r="7" fill="#555"/><circle cx="1664" cy="236" r="7" fill="#d4d4d4" fill-opacity=".55" stroke="#222" stroke-width="1.200"/>
<circle cx="1661" cy="275" r="7.500" fill="none" stroke="#333" stroke-dasharray="2 1.500"/><circle cx="1661" cy="275" r="5" fill="#333"/>
<path d="M1659 296H1669V309H1658" fill="none" stroke="#222" stroke-width="1.100"/>
<rect x="1653.500" y="301.500" width="7" height="7" fill="#fff" stroke="#222"/><rect x="1657" y="305" width="6" height="6" fill="#444" stroke="#222"/>

<!-- Pathfinder panel -->
<rect x="135" y="731" width="242" height="134" fill="#000" opacity=".12"/>
<rect x="134" y="729" width="242" height="134" rx="2" fill="#d4d4d4" stroke="#666"/>
<path d="M134.500 743V731Q134.500 729.500 136 729.500H374Q375.500 729.500 375.500 731V743Z" fill="url(#hd)"/>
<use href="#x" x="143" y="736"/><use href="#col" x="364" y="736"/>
<rect x="134.500" y="743" width="241" height="17" fill="url(#tr)"/>
<path d="M135 743H376" stroke="#666"/>
<rect x="244" y="743.500" width="66" height="17" fill="#d4d4d4"/>
<path d="M203 743V760M244 743V760M310 743V760" stroke="#666"/>
<text x="142" y="755" class="tab" textLength="55" lengthAdjust="spacingAndGlyphs">Transform</text>
<text x="210" y="755" class="tab" textLength="28" lengthAdjust="spacingAndGlyphs">Align</text>
<text x="251" y="755" class="tab" style="fill:#2a2a2a" textLength="53" lengthAdjust="spacingAndGlyphs">Pathfinder</text>
<use href="#menu" x="357" y="751"/>
<text x="140" y="776">Shape Modes:</text>
<g transform="translate(0,-1)">
<rect x="146.500" y="790.500" width="9" height="9" fill="#aaa" stroke="#444"/><rect x="150.500" y="793.500" width="9" height="9" fill="#aaa" stroke="#444"/>
<rect x="182.500" y="790.500" width="9" height="9" fill="#999" stroke="#444"/><rect x="186.500" y="793.500" width="9" height="9" fill="#d4d4d4" stroke="#444"/>
<rect x="218.500" y="790.500" width="9" height="9" fill="none" stroke="#888"/><rect x="222.500" y="793.500" width="9" height="9" fill="none" stroke="#888"/><rect x="222.500" y="793.500" width="5" height="6" fill="#888"/>
<rect x="254.500" y="790.500" width="9" height="9" fill="none" stroke="#333"/><rect x="258.500" y="793.500" width="9" height="9" fill="none" stroke="#333"/><rect x="258.500" y="793.500" width="5" height="6" fill="#d4d4d4" stroke="#333"/>
</g>
<rect x="285.500" y="786.500" width="83" height="18" fill="#dcdcdc" stroke="#aaa"/>
<text x="327" y="799" class="m g">Expand</text>
<text x="140" y="824">Pathfinders:</text>
<g transform="translate(0,-1)">
<path d="M151 839H157V844H151ZM154 842H160V847H154ZM158 845H163V851H158Z" fill="none" stroke="#444"/>
<rect x="190" y="838" width="6" height="5" fill="#444"/><rect x="196" y="838" width="3" height="6" fill="#444"/><rect x="196" y="844" width="9" height="7" fill="#222"/><rect x="191" y="845" width="5" height="2" fill="#444"/>
<rect x="228" y="837" width="11" height="11" fill="#444"/><rect x="232" y="842" width="11" height="9" fill="#222"/>
<rect x="268" y="837" width="11" height="11" fill="#bbb"/><rect x="272" y="841" width="11" height="11" fill="#c4c4c4"/><rect x="272" y="841" width="7" height="7" fill="#333"/>
<path d="M306 838H314V842M306 838V846H309M321 846V852H313V849" fill="none" stroke="#222" stroke-width="1.200"/><rect x="311" y="842" width="6" height="6" fill="none" stroke="#222"/>
<rect x="346.500" y="838.500" width="10" height="10" fill="#ccc" stroke="#555"/><path d="M357 843H358V851H349V849" fill="none" stroke="#222" stroke-width="1.300"/>
</g>
</svg>
</body></html>
